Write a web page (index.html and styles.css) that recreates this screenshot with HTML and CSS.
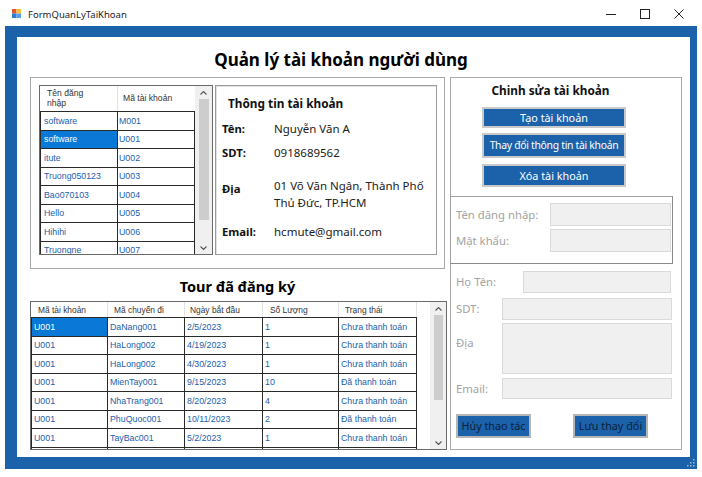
FILE: index.html
```html
<!DOCTYPE html>
<html lang="vi">
<head>
<meta charset="utf-8">
<title>FormQuanLyTaiKhoan</title>
<link rel="stylesheet" href="styles.css">
</head>
<body>
<div class="titlebar">
  <svg class="appicon" width="9" height="9" viewBox="0 0 9 9">
    <rect x="0" y="0" width="4.5" height="4.5" fill="#e2572c"/>
    <rect x="4.5" y="0" width="4.5" height="4.5" fill="#f2c230"/>
    <rect x="0" y="4.5" width="4.5" height="4.5" fill="#2f7fd1"/>
    <rect x="4.5" y="4.5" width="4.5" height="4.5" fill="#5aa0e6"/>
  </svg>
  <span class="wtitle">FormQuanLyTaiKhoan</span>
  <div class="wctrls">
    <svg width="10" height="10" viewBox="0 0 10 10"><path d="M0 5.5h10" stroke="#222" stroke-width="1"/></svg>
    <svg width="10" height="10" viewBox="0 0 10 10"><rect x="0.5" y="0.5" width="9" height="9" fill="none" stroke="#222" stroke-width="1"/></svg>
    <svg width="10" height="10" viewBox="0 0 10 10"><path d="M0.5 0.5L9.5 9.5M9.5 0.5L0.5 9.5" stroke="#222" stroke-width="1"/></svg>
  </div>
</div>

<div class="frame">
  <div class="client">
    <h1 class="title">Quản lý tài khoản người dùng</h1>
    <div class="main">
      <div class="leftcol">
        <div class="groupbox topbox">
          <div class="dgv dgv1">
            <div class="cols">
              <div class="hrow">
                <div class="hc c1">Tên đăng<br>nhập</div>
                <div class="hc c2">Mã tài khoản</div>
              </div>
              <div class="row"><div class="cell c1">software</div><div class="cell c2">M001</div></div>
              <div class="row"><div class="cell c1 sel">software</div><div class="cell c2">U001</div></div>
              <div class="row"><div class="cell c1">itute</div><div class="cell c2">U002</div></div>
              <div class="row"><div class="cell c1">Truong050123</div><div class="cell c2">U003</div></div>
              <div class="row"><div class="cell c1">Bao070103</div><div class="cell c2">U004</div></div>
              <div class="row"><div class="cell c1">Hello</div><div class="cell c2">U005</div></div>
              <div class="row"><div class="cell c1">Hihihi</div><div class="cell c2">U006</div></div>
              <div class="row"><div class="cell c1">Truongne</div><div class="cell c2">U007</div></div>
            </div>
            <div class="vscroll vs1">
              <div class="arrow"><svg width="7" height="4" viewBox="0 0 7 4"><path d="M0.5 3.5L3.5 0.5L6.5 3.5" fill="none" stroke="#555" stroke-width="1.1"/></svg></div>
              <div class="thumb"></div>
              <div class="track"></div>
              <div class="arrow"><svg width="7" height="4" viewBox="0 0 7 4"><path d="M0.5 0.5L3.5 3.5L6.5 0.5" fill="none" stroke="#555" stroke-width="1.1"/></svg></div>
            </div>
          </div>
          <div class="info">
            <div class="info-h">Thông tin tài khoản</div>
            <div class="irow r1"><span class="ilbl">Tên:</span><span class="ival">Nguyễn Văn A</span></div>
            <div class="irow r2"><span class="ilbl">SDT:</span><span class="ival">0918689562</span></div>
            <div class="irow r3"><span class="ilbl lbl-dia">Địa</span><span class="ival">01 Võ Văn Ngân, Thành Phố<br>Thủ Đức, TP.HCM</span></div>
            <div class="irow r4"><span class="ilbl">Email:</span><span class="ival">hcmute@gmail.com</span></div>
          </div>
        </div>

        <h2 class="subtitle">Tour đã đăng ký</h2>

        <div class="dgv dgv2">
          <div class="cols">
            <div class="hrow">
              <div class="hc d1">Mã tài khoản</div>
              <div class="hc d2">Mã chuyến đi</div>
              <div class="hc d3">Ngày bắt đầu</div>
              <div class="hc d4">Số Lượng</div>
              <div class="hc d5">Trạng thái</div>
            </div>
            <div class="row"><div class="cell d1 sel">U001</div><div class="cell d2">DaNang001</div><div class="cell d3">2/5/2023</div><div class="cell d4">1</div><div class="cell d5">Chưa thanh toán</div></div>
            <div class="row"><div class="cell d1">U001</div><div class="cell d2">HaLong002</div><div class="cell d3">4/19/2023</div><div class="cell d4">1</div><div class="cell d5">Chưa thanh toán</div></div>
            <div class="row"><div class="cell d1">U001</div><div class="cell d2">HaLong002</div><div class="cell d3">4/30/2023</div><div class="cell d4">1</div><div class="cell d5">Chưa thanh toán</div></div>
            <div class="row"><div class="cell d1">U001</div><div class="cell d2">MienTay001</div><div class="cell d3">9/15/2023</div><div class="cell d4">10</div><div class="cell d5">Đã thanh toán</div></div>
            <div class="row"><div class="cell d1">U001</div><div class="cell d2">NhaTrang001</div><div class="cell d3">8/20/2023</div><div class="cell d4">4</div><div class="cell d5">Chưa thanh toán</div></div>
            <div class="row"><div class="cell d1">U001</div><div class="cell d2">PhuQuoc001</div><div class="cell d3">10/11/2023</div><div class="cell d4">2</div><div class="cell d5">Đã thanh toán</div></div>
            <div class="row"><div class="cell d1">U001</div><div class="cell d2">TayBac001</div><div class="cell d3">5/2/2023</div><div class="cell d4">1</div><div class="cell d5">Chưa thanh toán</div></div>
            <div class="row"><div class="cell d1"></div><div class="cell d2"></div><div class="cell d3"></div><div class="cell d4"></div><div class="cell d5"></div></div>
          </div>
          <div class="spacer"></div>
          <div class="vscroll vs2">
            <div class="arrow"><svg width="7" height="4" viewBox="0 0 7 4"><path d="M0.5 3.5L3.5 0.5L6.5 3.5" fill="none" stroke="#555" stroke-width="1.1"/></svg></div>
            <div class="thumb"></div>
            <div class="track"></div>
            <div class="arrow"><svg width="7" height="4" viewBox="0 0 7 4"><path d="M0.5 0.5L3.5 3.5L6.5 0.5" fill="none" stroke="#555" stroke-width="1.1"/></svg></div>
          </div>
        </div>
      </div>

      <div class="groupbox editbox">
        <div class="edit-h">Chinh sửa tài khoản</div>
        <button class="btn b1">Tạo tài khoản</button>
        <button class="btn b2">Thay đổi thông tin tài khoản</button>
        <button class="btn b3">Xóa tài khoản</button>

        <div class="loginpanel">
          <div class="frow fr-user"><span class="flbl w94">Tên đăng nhập:</span><span class="tb tb-user"></span></div>
          <div class="frow fr-pass"><span class="flbl w94">Mật khẩu:</span><span class="tb tb-user"></span></div>
        </div>

        <div class="frow fr-name"><span class="flbl w67">Họ Tên:</span><span class="tb tb-name"></span></div>
        <div class="frow fr-sdt"><span class="flbl w46">SDT:</span><span class="tb tb-wide"></span></div>
        <div class="frow fr-dia"><span class="flbl w46 lbl-top">Địa</span><span class="tb tb-wide tb-area"></span></div>
        <div class="frow fr-email"><span class="flbl w46">Email:</span><span class="tb tb-wide tb-email"></span></div>

        <div class="actions">
          <button class="btn2">Hủy thao tác</button>
          <button class="btn2">Lưu thay đổi</button>
        </div>
      </div>
    </div>
  </div>
  <svg class="grip" width="8" height="8" viewBox="0 0 8 8">
    <rect x="6" y="0" width="1.5" height="1.5" fill="#9cb8d8"/>
    <rect x="3" y="3" width="1.5" height="1.5" fill="#9cb8d8"/>
    <rect x="6" y="3" width="1.5" height="1.5" fill="#9cb8d8"/>
    <rect x="0" y="6" width="1.5" height="1.5" fill="#9cb8d8"/>
    <rect x="3" y="6" width="1.5" height="1.5" fill="#9cb8d8"/>
    <rect x="6" y="6" width="1.5" height="1.5" fill="#9cb8d8"/>
  </svg>
</div>
</body>
</html>
```

FILE: styles.css
```css
* { box-sizing: border-box; }
html, body { margin: 0; padding: 0; }
body {
  width: 702px;
  height: 477px;
  overflow: hidden;
  background: #ffffff;
  font-family: "Noto Sans", "Open Sans", sans-serif;
  color: #111;
}

/* title bar */
.titlebar {
  height: 26px;
  display: flex;
  align-items: center;
  padding-left: 12px;
}
.appicon { display: block; margin-top: 1px; }
.wtitle {
  margin-left: 7px;
  font-size: 9.5px;
  color: #222;
  margin-top: 2px;
}
.wctrls {
  margin-left: auto;
  display: flex;
  align-items: center;
  gap: 24px;
  padding-right: 18px;
  margin-top: 2px;
}
.wctrls svg { display: block; }

/* blue frame */
.frame {
  position: relative;
  margin-left: 5px;
  width: 692px;
  height: 443px;
  background: #1b62aa;
  padding: 11px 7px 12px 12px;
}
.grip { position: absolute; right: 2px; bottom: 2px; }
.client {
  width: 673px;
  height: 420px;
  background: #fff;
}
.title {
  margin: 0;
  width: 648px;
  text-align: center;
  font-size: 17px;
  font-weight: 700;
  line-height: 20px;
  padding-top: 13px;
  height: 40px;
  color: #000;
}
.main {
  display: flex;
  gap: 5px;
  padding-left: 13px;
}
.leftcol { width: 415px; }

.groupbox { border: 1px solid #a9a9a9; }
.topbox {
  height: 192px;
  display: flex;
  gap: 2px;
  padding: 7px 0 0 8px;
}

/* data grids */
.dgv {
  display: flex;
  border: 1px solid #6a6a6a;
  background: #fff;
  overflow: hidden;
  font-family: "Liberation Sans", Arial, sans-serif;
}
.dgv .cols { overflow: hidden; }
.hrow { display: flex; background: #fff; }
.hc {
  color: #333;
  border-right: 1px solid #e3e3e3;
  display: flex;
  align-items: center;
}
.row { display: flex; height: 18.5px; }
.cell {
  border-right: 1px solid #2a2a2a;
  border-bottom: 1px solid #2a2a2a;
  color: #2260ac;
  display: flex;
  align-items: center;
  white-space: nowrap;
  overflow: hidden;
}
.row .cell:first-child { border-left: 1px solid #2a2a2a; }
.cell.sel { background: #0a78d6; color: #fff; }

.dgv1 { width: 174px; height: 170px; }
.dgv1 .cols { width: 155px; }
.dgv1 .hrow { height: 26px; border-bottom: 1px solid #2a2a2a; }
.dgv1 .hc { font-size: 8.6px; line-height: 9.5px; }
.dgv1 .cell { font-size: 8.8px; }
.dgv1 .c1 { width: 78px; padding-left: 3px; }
.dgv1 .c2 { width: 77px; padding-left: 1px; }
.dgv1 .hc.c1 { padding-left: 7px; }
.dgv1 .hc.c2 { padding-left: 5px; border-right: none; }

.vscroll {
  background: #f0f0f0;
  display: flex;
  flex-direction: column;
  align-items: center;
}
.vscroll .arrow {
  height: 13px;
  width: 100%;
  display: flex;
  align-items: center;
  justify-content: center;
}
.vscroll .arrow svg { display: block; }
.vscroll .thumb { width: 9px; background: #cdcdcd; }
.vscroll .track { flex: 1; }
.vs1 { width: 17px; }
.vs1 .thumb { height: 121px; width: 10px; }

.dgv2 { width: 417px; height: 149px; }
.dgv2 .cols { width: 386px; }
.dgv2 .hrow { height: 16px; border-bottom: 1px solid #2a2a2a; }
.dgv2 .hc { font-size: 8.4px; }
.dgv2 .cell { font-size: 8.8px; padding-left: 2px; }
.dgv2 .d1 { width: 77px; }
.dgv2 .d2 { width: 77px; }
.dgv2 .d3 { width: 78px; }
.dgv2 .d4 { width: 76px; }
.dgv2 .d5 { width: 78px; }
.dgv2 .hc.d1 { padding-left: 7px; }
.dgv2 .hc.d2 { padding-left: 6px; }
.dgv2 .hc.d3 { padding-left: 5px; }
.dgv2 .hc.d4 { padding-left: 7px; }
.dgv2 .hc.d5 { padding-left: 6px; }
.dgv2 .spacer { width: 13px; }
.vs2 { width: 16px; }
.vs2 .thumb { height: 85px; }

/* info panel */
.info {
  width: 222px;
  height: 170px;
  border: 1px solid #9c9c9c;
  box-shadow: inset 1px 1px 0 #e2e2e2;
  padding: 9px 0 0 6px;
  font-size: 11.5px;
  line-height: 17px;
}
.info-h {
  font-weight: 700;
  font-size: 11.8px;
  padding-left: 6px;
  color: #111;
}
.irow { display: flex; }
.ilbl { width: 52px; font-weight: 700; color: #111; font-size: 11.3px; }
.ival { color: #222; }
.r1 { margin-top: 7.5px; }
.r2 { margin-top: 7px; }
.r3 { margin-top: 16px; }
.r4 { margin-top: 12px; }
.lbl-dia { padding-top: 3px; }

.subtitle {
  margin: 0;
  height: 32px;
  text-align: center;
  font-size: 14.5px;
  font-weight: 700;
  line-height: 18px;
  padding-top: 8px;
  color: #000;
}

/* edit box */
.editbox {
  width: 232px;
  height: 373px;
  padding-top: 4px;
  display: flex;
  flex-direction: column;
  align-items: flex-start;
}
.edit-h {
  width: 199px;
  text-align: center;
  font-size: 11.8px;
  font-weight: 700;
  line-height: 17px;
  color: #111;
}
.btn {
  margin-left: 31px;
  width: 144px;
  background: #1b62aa;
  color: #fff;
  border: 2px solid #c9c9c9;
  font-family: "Noto Sans", "Open Sans", sans-serif;
  font-size: 10.8px;
  padding: 0;
  white-space: nowrap;
  overflow: hidden;
}
.b1 { height: 21px; margin-top: 7.5px; }
.b2 { height: 25px; margin-top: 5px; font-size: 10.4px; letter-spacing: -0.3px; }
.b3 { height: 23px; margin-top: 6px; }

.loginpanel {
  margin-top: 9px;
  margin-left: -1px;
  width: 223px;
  height: 68px;
  border: 1px solid #a0a0a0;
  border-right-color: #8a8a8a;
  border-bottom-color: #8a8a8a;
  padding-top: 6px;
}
.frow {
  display: flex;
  align-items: center;
  padding-left: 5px;
}
.flbl {
  color: #a3a3a3;
  font-size: 11.3px;
  line-height: 15px;
}
.w94 { width: 94px; }
.w67 { width: 67px; }
.w46 { width: 46px; }
.tb {
  display: block;
  background: #f0f0f0;
  border: 1px solid #dadada;
}
.tb-user { width: 121px; height: 23px; }
.fr-pass { margin-top: 3px; }
.fr-name { margin-top: 7px; }
.tb-name { width: 148px; height: 22px; }
.tb-wide { width: 170px; height: 22px; }
.fr-sdt { margin-top: 5px; }
.fr-dia { margin-top: 3px; align-items: flex-start; }
.tb-area { height: 51px; }
.lbl-top { padding-top: 12px; }
.fr-email { margin-top: 4px; }
.tb-email { height: 21px; }

.actions {
  display: flex;
  gap: 42px;
  margin-top: 15px;
  padding-left: 5px;
}
.btn2 {
  width: 75px;
  height: 24px;
  background: #1b62aa;
  border: 2px solid #b5b5b5;
  color: #0d1f3c;
  font-family: "Noto Sans", "Open Sans", sans-serif;
  font-size: 10.8px;
  padding: 0;
  white-space: nowrap;
}
```
